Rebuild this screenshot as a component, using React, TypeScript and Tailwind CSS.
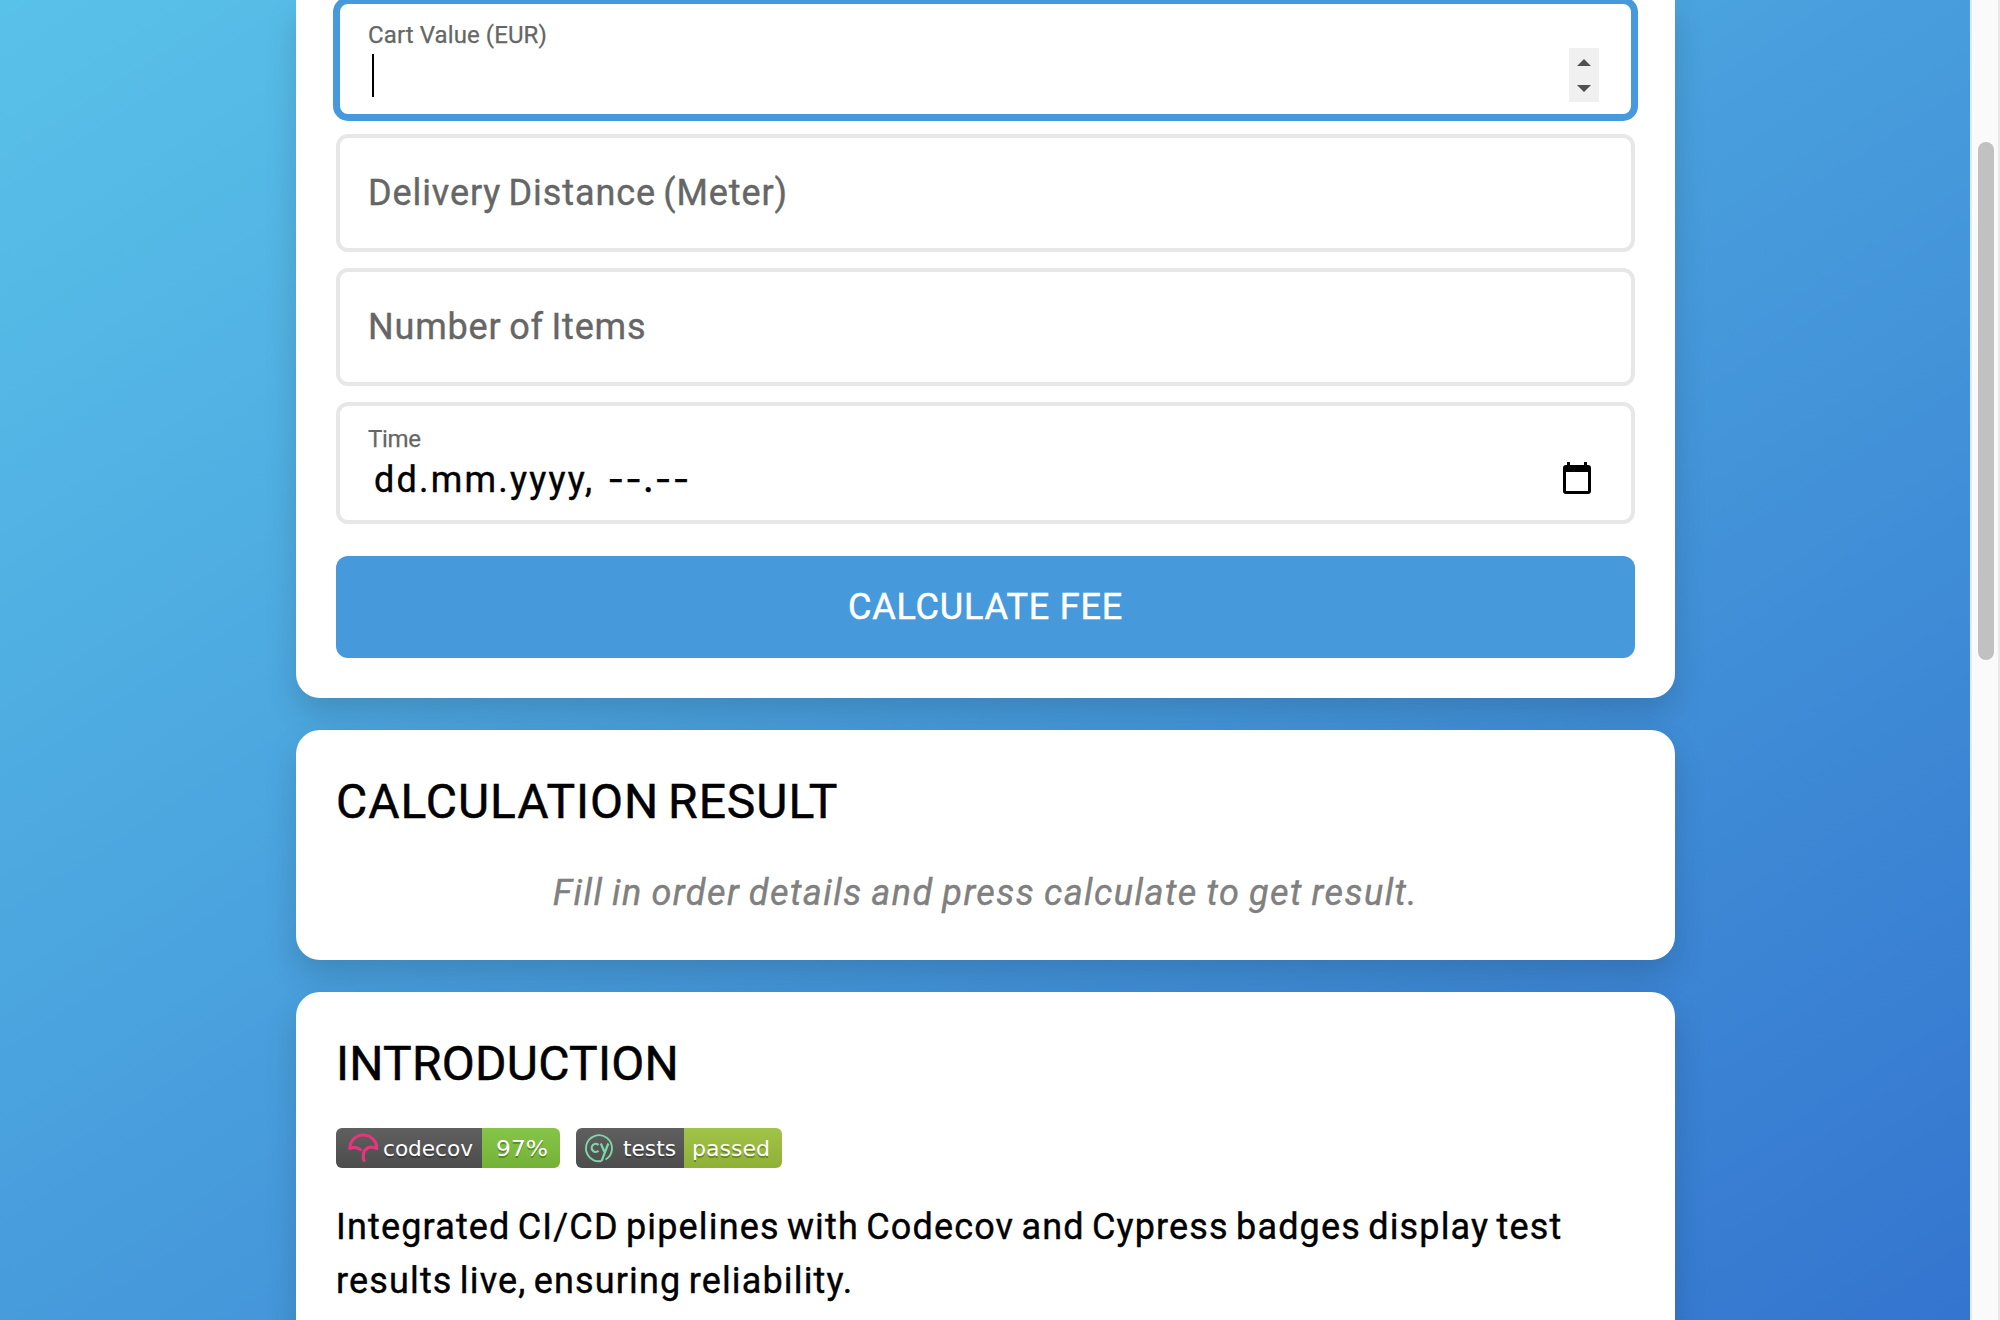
import React from "react";

const text = "font-[Roboto,sans-serif] whitespace-nowrap";

function Field({ label, tracking }: { label: string; tracking: string }) {
  return (
    <div className="flex h-[118px] shrink-0 items-center rounded-xl border-4 border-[#e7e7e7] pl-7">
      <span className={`text-[36px] leading-[44px] text-[#666] [-webkit-text-stroke:0.4px_#666] ${tracking}`}>{label}</span>
    </div>
  );
}

function BadgeText({ x, width, children }: { x: number; width: number; children: string }) {
  return (
    <g fontFamily="DejaVu Sans, sans-serif" fontSize="22">
      <text x={x} y="30" textLength={width} lengthAdjust="spacingAndGlyphs" fill="#010101" fillOpacity=".3">{children}</text>
      <text x={x} y="28" textLength={width} lengthAdjust="spacingAndGlyphs" fill="#fff">{children}</text>
    </g>
  );
}

function CodecovBadge() {
  return (
    <svg width="224" height="40" viewBox="0 0 224 40">
      <defs>
        <linearGradient id="shade" x1="0" y1="0" x2="0" y2="1">
          <stop offset="0" stopColor="#bbb" stopOpacity=".1" />
          <stop offset="1" stopOpacity=".1" />
        </linearGradient>
        <clipPath id="codecov-clip"><rect width="224" height="40" rx="6" /></clipPath>
      </defs>
      <g clipPath="url(#codecov-clip)">
        <rect width="146" height="40" fill="#555" />
        <rect x="146" width="78" height="40" fill="#81c63d" />
        <rect width="224" height="40" fill="url(#shade)" />
      </g>
      <path d="M13.800 20.500 A13.500 13.500 0 0 1 40.800 20.500 Q37 18.300 32.500 19.500 Q27.400 22 27.400 27 V31 L28 32.500 M13.800 20.500 Q18.500 17.800 24.500 21.500" fill="none" stroke="#e0377e" strokeWidth="3.200" strokeLinecap="round" strokeLinejoin="round" />
      <BadgeText x={47} width={90}>codecov</BadgeText>
      <BadgeText x={160} width={52}>97%</BadgeText>
    </svg>
  );
}

function CypressBadge() {
  return (
    <svg width="206" height="40" viewBox="0 0 206 40">
      <defs>
        <clipPath id="cypress-clip"><rect width="206" height="40" rx="6" /></clipPath>
      </defs>
      <g clipPath="url(#cypress-clip)">
        <rect width="108" height="40" fill="#555" />
        <rect x="108" width="98" height="40" fill="#9fc43c" />
        <rect width="206" height="40" fill="url(#shade)" />
      </g>
      <g fill="none" stroke="#7fd6ab" strokeWidth="1.900">
        <path d="M25.500 33 A13 13 0 1 1 29.500 31.500" />
        <path d="M22.500 17 A4 4 0 1 0 22.500 22.800" strokeWidth="2.200" />
        <path d="M24.800 15.500 L28.500 24 M32.300 15.500 L27.500 28 Q26.500 31 25.500 33" strokeWidth="2.200" />
      </g>
      <BadgeText x={47} width={53}>tests</BadgeText>
      <BadgeText x={116} width={78}>passed</BadgeText>
    </svg>
  );
}

const card = "bg-white px-10 shadow-[0_16px_32px_rgba(0,0,0,0.15)]";
const heading = "mt-10 text-[48px] leading-[64px] text-black [-webkit-text-stroke:0.5px_#000]";

export default function App() {
  return (
    <div className={`flex h-[1320px] w-[2000px] overflow-hidden ${text}`}>
      <main className="flex w-[1970px] flex-col items-center gap-8 bg-[linear-gradient(147deg,#59c2e9_0%,#469adb_53%,#3475cf_100%)] pl-px">
        <section className={`flex h-[698px] w-[1379px] shrink-0 flex-col gap-4 rounded-b-3xl ${card}`}>
          <div className="-m-[3px] flex h-[124px] shrink-0 items-start justify-between rounded-[15px] border-[7px] border-[#469adb] pl-7 pr-8">
            <div>
              <div className="mt-4 text-[24px] leading-[30px] tracking-[0.1px] text-[#666] [-webkit-text-stroke:0.25px_#666]">Cart Value (EUR)</div>
              <div className="ml-1 mt-1 h-[43px] w-[2px] bg-black" />
            </div>
            <svg className="mt-11" width="30" height="54" viewBox="0 0 30 54">
              <rect width="30" height="54" fill="#f0f0f0" />
              <path d="M8 18 L15 11 L22 18 Z M8 37 L15 44 L22 37 Z" fill="#505050" />
            </svg>
          </div>
          <Field label="Delivery Distance (Meter)" tracking="tracking-[0.9px] [word-spacing:-2.5px]" />
          <Field label="Number of Items" tracking="tracking-[0.8px] [word-spacing:-2px]" />
          <div className="flex h-[122px] shrink-0 items-start justify-between rounded-xl border-4 border-[#e7e7e7] pl-7 pr-[38px]">
            <div>
              <div className="mt-[18px] text-[24px] leading-[30px] text-[#666] [-webkit-text-stroke:0.25px_#666] tracking-[-0.3px]">Time</div>
              <div className="ml-1.5 mt-[3px] text-[36px] leading-[44px] tracking-[2.2px] text-black [-webkit-text-stroke:0.4px_#000]">
                dd.mm.yyyy, <span className="ml-[2px] font-[Inter,sans-serif] tracking-[1.3px]">--.--</span>
              </div>
            </div>
            <svg className="mt-14" width="31" height="33" viewBox="0 0 31 33">
              <path fillRule="evenodd" d="M4 3 H5 V0 H8 V3 H22 V0 H25 V3 H26 Q29 3 29 6 V29 Q29 32 26 32 H4 Q1 32 1 29 V6 Q1 3 4 3 Z M4 10 V29 H26 V10 Z" />
            </svg>
          </div>
          <button className="mt-4 flex h-[102px] shrink-0 items-center justify-center rounded-xl bg-[#469adb] text-[36px] leading-[44px] tracking-[0.8px] text-white [-webkit-text-stroke:0.5px_#fff]">
            CALCULATE FEE
          </button>
        </section>
        <section className={`h-[230px] w-[1379px] shrink-0 rounded-3xl ${card}`}>
          <h2 className={`${heading} tracking-[0.95px] [word-spacing:-4px]`}>CALCULATION RESULT</h2>
          <p className="mt-[37px] text-center text-[36px] italic leading-[44px] tracking-[1.45px] text-[#808080] [-webkit-text-stroke:0.4px_#808080] [word-spacing:-1.6px]">Fill in order details and press calculate to get result.</p>
        </section>
        <section className={`h-[400px] w-[1379px] shrink-0 rounded-3xl ${card}`}>
          <h2 className={`${heading} tracking-[0.25px]`}>INTRODUCTION</h2>
          <div className="mt-8 flex gap-4">
            <CodecovBadge />
            <CypressBadge />
          </div>
          <p className="mt-8 text-[36px] leading-[54px] tracking-[1.15px] text-black [-webkit-text-stroke:0.4px_#000] [word-spacing:-2.8px]">
            Integrated CI/CD pipelines with Codecov and Cypress badges display test<br />
            results live, ensuring reliability.
          </p>
        </section>
      </main>
      <aside className="w-[30px] border-x-2 border-[#e8e8e8] bg-[#fafafa] pl-1.5 pt-[142px]">
        <div className="h-[518px] w-4 rounded-full bg-[#c1c1c1]" />
      </aside>
    </div>
  );
}
